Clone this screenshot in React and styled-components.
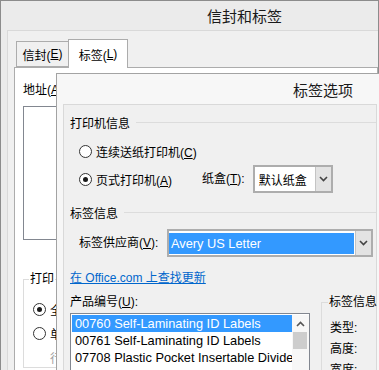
import React from "react";
import styled, { createGlobalStyle } from "styled-components";

const GlobalStyle = createGlobalStyle`
  html, body {
    margin: 0;
    padding: 0;
    background: #ebebeb;
  }
  body {
    font-family: "Liberation Sans", "Noto Sans CJK SC", sans-serif;
    font-size: 12px;
    color: #000;
  }
`;

const Desktop = styled.div`
  position: relative;
  width: 379px;
  height: 370px;
  overflow: hidden;
  background: #ebebeb;
`;

// windows sit on the desktop at their own coordinates
const Window = styled.div`
  position: absolute;
  left: ${(p) => p.$x}px;
  top: ${(p) => p.$y}px;
  width: ${(p) => p.$w}px;
  height: ${(p) => p.$h}px;
  box-sizing: border-box;
  display: flex;
  flex-direction: column;
  background: ${(p) => (p.$active ? "#f7f7f7" : "#ebebeb")};
  border: 1px solid ${(p) => (p.$active ? "#a3a3a3" : "#8c8c8c")};
`;

const TitleBar = styled.div`
  height: ${(p) => p.$h}px;
  flex: none;
  display: flex;
  align-items: center;
  padding-left: ${(p) => p.$pad}px;
  font-family: "Noto Sans CJK SC", sans-serif;
  font-size: 15px;
  color: #1a1a1a;
`;

const Client = styled.div`
  flex: 1;
  display: flex;
  flex-direction: column;
  margin: 0 ${(p) => p.$mr || 0}px 0 6px;
  padding: ${(p) => p.$pad};
  background: #f0f0f0;
  border-top: 1px solid #d9d9d9;
  border-left: 1px solid #d9d9d9;
  border-right: ${(p) => (p.$mr ? "1px solid #d9d9d9" : "none")};
  min-height: 0;
  min-width: 0;
`;

/* ---- back window: tabs ---- */

const TabStrip = styled.div`
  display: flex;
  align-items: flex-end;
  height: 28px;
  padding-left: 2px;
  position: relative;
  z-index: 1;
`;

const Tab = styled.div`
  box-sizing: border-box;
  width: ${(p) => (p.$active ? 60 : 53)}px;
  height: ${(p) => (p.$active ? 29 : 26)}px;
  margin-left: ${(p) => (p.$active ? -1 : 0)}px;
  margin-bottom: ${(p) => (p.$active ? -1 : 0)}px;
  display: flex;
  align-items: center;
  justify-content: center;
  background: ${(p) => (p.$active ? "#fff" : "#f0f0f0")};
  border: 1px solid #acacac;
  border-bottom: ${(p) => (p.$active ? "none" : "1px solid #acacac")};
`;

const TabPanel = styled.div`
  flex: 1;
  display: flex;
  flex-direction: column;
  background: #fff;
  border: 1px solid #acacac;
  padding: 14px 0 0 8px;
`;

const FieldLabel = styled.div`
  line-height: 16px;
  height: 16px;
  white-space: nowrap;
  color: ${(p) => (p.$disabled ? "#a0a0a0" : "#000")};
`;

const AddressBox = styled.div`
  margin-top: 8px;
  height: 134px;
  box-sizing: border-box;
  border: 1px solid #828790;
  background: #fff;
`;

const Group = styled.fieldset`
  margin: 31px 0 0 0;
  padding: 14px 0 0 9px;
  border: 1px solid #dcdcdc;
  border-right: none;
  min-width: 0;
  display: flex;
  flex-direction: column;
  gap: 8px;
`;

const Legend = styled.legend`
  padding: 0 1px;
  margin-left: ${(p) => p.$ml}px;
  line-height: 16px;
  white-space: nowrap;
`;

/* ---- radios ---- */

const RadioRow = styled.label`
  display: flex;
  align-items: center;
  gap: 4px;
  height: 16px;
  width: ${(p) => (p.$w ? `${p.$w}px` : "auto")};
  flex: none;
  white-space: nowrap;
`;

const RadioCircle = styled.span`
  width: 13px;
  height: 13px;
  box-sizing: border-box;
  border-radius: 50%;
  border: 1px solid #333;
  background: #fff;
  display: inline-flex;
  align-items: center;
  justify-content: center;
  flex: none;

  &::after {
    content: "";
    width: 5px;
    height: 5px;
    border-radius: 50%;
    background: #1a1a1a;
    display: ${(p) => (p.$checked ? "block" : "none")};
  }
`;

const U = styled.span`
  text-decoration: underline;
`;

const Radio = ({ checked, children, w }) => (
  <RadioRow $w={w}>
    <RadioCircle $checked={checked} />
    <span>{children}</span>
  </RadioRow>
);

/* ---- front window ---- */

const SectionHead = styled.div`
  display: flex;
  align-items: center;
  gap: 6px;
  height: 16px;
  margin-top: ${(p) => p.$mt}px;
  white-space: nowrap;

  &::after {
    content: "";
    flex: 1;
    height: 1px;
    background: #dcdcdc;
  }
`;

const Row = styled.div`
  display: flex;
  align-items: center;
  margin-top: ${(p) => p.$mt}px;
  padding-left: ${(p) => p.$pl || 0}px;
  white-space: nowrap;
`;

const Combo = styled.div`
  display: flex;
  box-sizing: border-box;
  width: ${(p) => p.$w}px;
  height: 28px;
  flex: none;
  margin-left: ${(p) => p.$ml || 0}px;
  border: 2px solid #adadad;
  background: #fff;
`;

const ComboField = styled.div`
  flex: 1;
  display: flex;
  padding: ${(p) => (p.$selected ? "2px 1px 1px 0" : "0 0 0 2px")};
`;

const ComboValue = styled.span`
  flex: 1;
  display: flex;
  align-items: center;
  padding-left: 2px;
  background: ${(p) => (p.$selected ? "#3399ff" : "transparent")};
  color: ${(p) => (p.$selected ? "#fff" : "#000")};
  font-size: ${(p) => (p.$selected ? 12.8 : 12)}px;
`;

const ComboButton = styled.div`
  width: 15px;
  flex: none;
  display: flex;
  align-items: center;
  justify-content: center;
  background: #e3e3e3;
  border-left: 1px solid #c4c4c4;
`;

const Chevron = () => (
  <svg width="9" height="6" viewBox="0 0 9 6">
    <path d="M1 1 L4.5 4.5 L8 1" fill="none" stroke="#444" strokeWidth="1.6" />
  </svg>
);

const ChevronUp = () => (
  <svg width="9" height="6" viewBox="0 0 9 6">
    <path d="M1 5 L4.5 1.5 L8 5" fill="none" stroke="#555" strokeWidth="1.6" />
  </svg>
);

const Link = styled.a`
  color: #0066cc;
  text-decoration: underline;
  line-height: 16px;
  margin-top: 13px;
  align-self: flex-start;
  white-space: nowrap;
`;

const Bottom = styled.div`
  display: flex;
  gap: 11px;
  margin-top: 8px;
`;

const Column = styled.div`
  display: flex;
  flex-direction: column;
  width: ${(p) => p.$w}px;
  flex: none;
`;

const ListBox = styled.div`
  margin-top: 3px;
  box-sizing: border-box;
  height: 100px;
  display: flex;
  border: 1px solid #828790;
  background: #fff;
  padding: 1px 0 0 1px;
`;

const Items = styled.div`
  flex: 1;
  display: flex;
  flex-direction: column;
  overflow: hidden;
`;

const Item = styled.div`
  height: 17px;
  line-height: 17px;
  padding-left: 3px;
  font-size: 12.8px;
  white-space: nowrap;
  overflow: hidden;
  background: ${(p) => (p.$selected ? "#3399ff" : "transparent")};
  color: ${(p) => (p.$selected ? "#fff" : "#000")};
`;

const ScrollBar = styled.div`
  width: 17px;
  flex: none;
  display: flex;
  flex-direction: column;
  background: #f7f7f7;
`;

const ScrollArrow = styled.div`
  height: 17px;
  display: flex;
  align-items: center;
  justify-content: center;
`;

const Thumb = styled.div`
  height: 17px;
  margin: 0 2px 0 1px;
  background: #cdcdcd;
`;

const InfoGroup = styled.fieldset`
  flex: 1;
  margin: 0;
  padding: 10px 0 0 8px;
  border: 1px solid #dcdcdc;
  border-right: none;
  display: flex;
  flex-direction: column;
  gap: 5px;
  min-width: 0;
`;

export default function App() {
  return (
    <>
      <GlobalStyle />
      <Desktop>
        <Window $x={0} $y={0} $w={379} $h={380}>
          <TitleBar $h={29} $pad={206}>信封和标签</TitleBar>
          <Client $pad="8px 0 0 6px">
            <TabStrip>
              <Tab>
                信封(<U>E</U>)
              </Tab>
              <Tab $active>
                标签(<U>L</U>)
              </Tab>
            </TabStrip>
            <TabPanel>
              <FieldLabel>
                地址(<U>A</U>):
              </FieldLabel>
              <AddressBox />
              <Group>
                <Legend $ml={-4}>打印</Legend>
                <Radio checked>全页为相同标签(F)</Radio>
                <Radio>单个标签(N)</Radio>
                <Row $mt={2} $pl={17}>
                  <FieldLabel $disabled>行(W):</FieldLabel>
                </Row>
              </Group>
            </TabPanel>
          </Client>
        </Window>

        <Window $x={56} $y={73} $w={328} $h={320} $active>
          <TitleBar $h={30} $pad={236}>标签选项</TitleBar>
          <Client $pad="9px 0 0 6px" $mr={6}>
            <SectionHead $mt={0}>打印机信息</SectionHead>
            <Row $mt={13} $pl={9}>
              <Radio>
                连续送纸打印机(<U>C</U>)
              </Radio>
            </Row>
            <Row $mt={6} $pl={9}>
              <Radio checked w={123}>
                页式打印机(<U>A</U>)
              </Radio>
              <FieldLabel>
                纸盒(<U>T</U>):
              </FieldLabel>
              <Combo $w={80} $ml={8}>
                <ComboField>
                  <ComboValue>默认纸盒</ComboValue>
                </ComboField>
                <ComboButton>
                  <Chevron />
                </ComboButton>
              </Combo>
            </Row>
            <SectionHead $mt={11}>标签信息</SectionHead>
            <Row $mt={9} $pl={9}>
              <FieldLabel style={{ width: 88 }}>
                标签供应商(<U>V</U>):
              </FieldLabel>
              <Combo $w={206}>
                <ComboField $selected>
                  <ComboValue $selected>Avery US Letter</ComboValue>
                </ComboField>
                <ComboButton>
                  <Chevron />
                </ComboButton>
              </Combo>
            </Row>
            <Link>在 Office.com 上查找更新</Link>
            <Bottom>
              <Column $w={240}>
                <FieldLabel>
                  产品编号(<U>U</U>):
                </FieldLabel>
                <ListBox>
                  <Items>
                    <Item $selected>00760 Self-Laminating ID Labels</Item>
                    <Item>00761 Self-Laminating ID Labels</Item>
                    <Item>07708 Plastic Pocket Insertable Dividers</Item>
                    <Item>07782 Plastic Pocket Insertable Dividers</Item>
                  </Items>
                  <ScrollBar>
                    <ScrollArrow>
                      <ChevronUp />
                    </ScrollArrow>
                    <Thumb />
                  </ScrollBar>
                </ListBox>
              </Column>
              <InfoGroup>
                <Legend $ml={-2}>标签信息</Legend>
                <FieldLabel>类型:</FieldLabel>
                <FieldLabel>高度:</FieldLabel>
                <FieldLabel>宽度:</FieldLabel>
              </InfoGroup>
            </Bottom>
          </Client>
        </Window>
      </Desktop>
    </>
  );
}
